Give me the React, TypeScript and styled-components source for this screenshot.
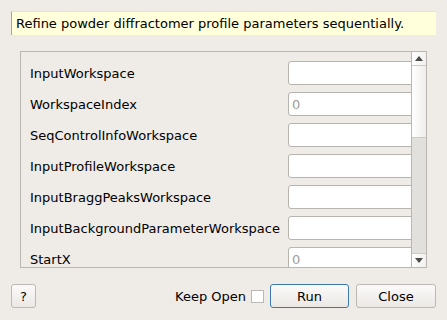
import React from 'react';
import styled, {createGlobalStyle} from 'styled-components';

const GlobalStyle = createGlobalStyle`
  html, body {
    margin: 0;
    padding: 0;
    background: #efebe7;
  }

  body {
    font-family: 'DejaVu Sans', 'Liberation Sans', sans-serif;
    font-size: 13px;
    color: #000;
  }
`;

const Dialog = styled.div`
  display: flex;
  flex-direction: column;

  width: 447px;
  height: 320px;
  box-sizing: border-box;
  padding: 11px 11px 0;
`;

const Description = styled.div`
  display: flex;
  align-items: center;

  height: 24px;
  box-sizing: border-box;
  padding-left: 4px;

  background: #ffffdc;
  border-left: 1px solid #a8a49f;
  border-top: 1px solid #e6e3d3;
`;

const ScrollFrame = styled.div`
  display: flex;

  height: 217px;
  margin: 16px 9px 0;
  box-sizing: border-box;

  border: 1px solid #bab6b1;
`;

const ScrollContent = styled.div`
  flex: 1;
  overflow: hidden;
`;

const PropertyGrid = styled.div`
  display: grid;
  grid-template-columns: auto 150px;
  column-gap: 8px;
  row-gap: 7px;
  align-items: center;

  padding: 9px 0 0 9px;
`;

const PropertyLabel = styled.span`
  white-space: nowrap;
`;

const PropertyInput = styled.input`
  height: 24px;
  box-sizing: border-box;
  padding: 0 3px;

  font: inherit;
  background: #fff;
  border: 1px solid #b7b3ae;
  border-radius: 3px;
  outline: none;

  &::placeholder {
    color: #a09d9a;
  }
`;

const ScrollBar = styled.div`
  display: flex;
  flex-direction: column;

  width: 14px;
  border-left: 1px solid #bab6b1;
  background: #e1e0dd;
`;

const ArrowButton = styled.div<{$down?: boolean}>`
  display: flex;
  align-items: center;
  justify-content: center;

  height: 13px;
  background: linear-gradient(to right, #ffffff, #f1f0ee);
  ${({$down}) => ($down ? 'margin-top: auto; border-top: 1px solid #cfccc8;' : 'border-bottom: 1px solid #cfccc8;')}
`;

const Handle = styled.div`
  height: 71px;
  background: linear-gradient(to right, #ffffff, #eeedeb);
  border-bottom: 1px solid #cfccc8;
`;

const Footer = styled.div`
  display: flex;
  align-items: center;

  margin-top: 16px;
`;

const Button = styled.button<{$primary?: boolean; $width: number}>`
  width: ${({$width}) => $width}px;
  height: 24px;
  padding: 0;

  font: inherit;
  color: #000;
  background: linear-gradient(to bottom, #fbfaf9, #ebe8e5);
  border: 1px solid ${({$primary}) => ($primary ? '#3d78ad' : '#bcb8b3')};
  border-radius: 3px;
`;

const KeepOpen = styled.label`
  display: flex;
  align-items: center;
  gap: 5px;

  margin-left: auto;
  margin-right: 6px;
`;

const CheckBox = styled.span`
  width: 13px;
  height: 13px;
  box-sizing: border-box;
  background: #fff;
  border: 1px solid #bcb8b3;
`;

const properties: {name: string; placeholder?: string}[] = [
  {name: 'InputWorkspace'},
  {name: 'WorkspaceIndex', placeholder: '0'},
  {name: 'SeqControlInfoWorkspace'},
  {name: 'InputProfileWorkspace'},
  {name: 'InputBraggPeaksWorkspace'},
  {name: 'InputBackgroundParameterWorkspace'},
  {name: 'StartX', placeholder: '0'},
];

const Arrow: React.FC<{down?: boolean}> = ({down}) => (
  <svg width="8" height="5" viewBox="0 0 8 5">
    <polygon points={down ? '0,0 8,0 4,5' : '0,5 8,5 4,0'} fill="#4a4a4a" />
  </svg>
);

const App: React.FC = () => (
  <>
    <GlobalStyle />
    <Dialog>
      <Description>Refine powder diffractomer profile parameters sequentially.</Description>
      <ScrollFrame>
        <ScrollContent>
          <PropertyGrid>
            {properties.map(p => (
              <React.Fragment key={p.name}>
                <PropertyLabel>{p.name}</PropertyLabel>
                <PropertyInput placeholder={p.placeholder} />
              </React.Fragment>
            ))}
          </PropertyGrid>
        </ScrollContent>
        <ScrollBar>
          <ArrowButton>
            <Arrow />
          </ArrowButton>
          <Handle />
          <ArrowButton $down>
            <Arrow down />
          </ArrowButton>
        </ScrollBar>
      </ScrollFrame>
      <Footer>
        <Button $width={25}>?</Button>
        <KeepOpen>
          Keep Open
          <CheckBox />
        </KeepOpen>
        <Button $primary $width={79}>
          Run
        </Button>
        <Button $width={80} style={{marginLeft: 7}}>
          Close
        </Button>
      </Footer>
    </Dialog>
  </>
);

export default App;
